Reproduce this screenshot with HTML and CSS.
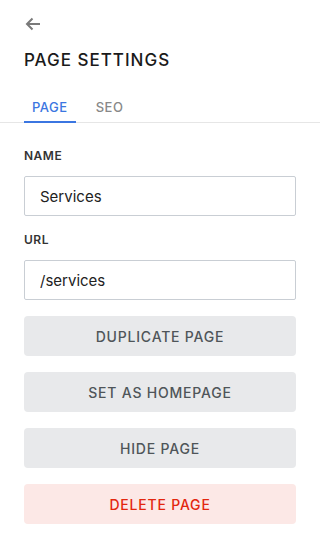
FILE: index.html
```html
<!DOCTYPE html>
<html lang="en">

<head>
  <meta charset="UTF-8">
  <meta name="viewport" content="width=device-width, initial-scale=1.0">
  <title>Page Settings</title>
  <link rel="stylesheet" href="styles.css">
</head>

<body>
  <div class="panel">
    <div class="panel-header">
      <button class="back-btn" title="Back">
        <svg width="16" height="14" viewBox="0 0 16 14">
          <path d="M15 7H2M7.5 1.5L2 7l5.5 5.5" fill="none" stroke="#7a7a7a" stroke-width="2" />
        </svg>
      </button>
      <h1 class="panel-title">PAGE SETTINGS</h1>
    </div>

    <div class="tabs">
      <div class="tab active">PAGE</div>
      <div class="tab">SEO</div>
    </div>

    <div class="panel-body">
      <div class="field">
        <label class="field-label">NAME</label>
        <input class="field-input" type="text" value="Services">
      </div>
      <div class="field field-last">
        <label class="field-label">URL</label>
        <input class="field-input" type="text" value="/services">
      </div>

      <div class="actions">
        <button class="action-btn">DUPLICATE PAGE</button>
        <button class="action-btn">SET AS HOMEPAGE</button>
        <button class="action-btn">HIDE PAGE</button>
        <button class="action-btn danger">DELETE PAGE</button>
      </div>
    </div>
  </div>
</body>

</html>
```

FILE: styles.css
```css
body {
  font-family: Inter, 'Liberation Sans', sans-serif;
  margin: 0;
  background-color: #fff;
  color: #222;
}

button {
  font-family: inherit;
  border: none;
  cursor: pointer;
}

.panel-header {
  padding: 17px 24px 0;
}

.back-btn {
  display: block;
  padding: 0;
  width: 16px;
  height: 14px;
  margin-left: 1px;
  background: none;
}

.back-btn svg {
  display: block;
}

.panel-title {
  margin: 19px 0 0;
  font-size: 17px;
  font-weight: 500;
  letter-spacing: 1px;
  line-height: 20px;
  color: #1a1a1a;
}

.tabs {
  display: flex;
  gap: 12px;
  margin-top: 27px;
  padding: 0 24px;
  border-bottom: 1px solid #e6e6e6;
}

.tab {
  padding: 3px 8px 7px;
  font-size: 13px;
  font-weight: 500;
  letter-spacing: 0.5px;
  line-height: 14px;
  color: #888;
  border-bottom: 2px solid transparent;
  margin-bottom: -1px;
}

.tab.active {
  color: #3b76e1;
  border-bottom-color: #3b76e1;
}

.panel-body {
  padding: 26px 24px 24px;
}

.field {
  display: flex;
  flex-direction: column;
  margin-bottom: 17px;
}

.field-last {
  margin-bottom: 16px;
}

.field-label {
  font-size: 12px;
  font-weight: 600;
  letter-spacing: 0.5px;
  line-height: 14px;
  color: #333;
  margin-bottom: 13px;
}

.field-input {
  height: 40px;
  box-sizing: border-box;
  padding: 0 15px;
  border: 1px solid #c9ced4;
  border-radius: 2px;
  font-family: inherit;
  font-size: 15px;
  color: #222;
  outline: none;
}

.actions {
  display: flex;
  flex-direction: column;
  gap: 16px;
}

.action-btn {
  height: 40px;
  border-radius: 4px;
  background-color: #e8e9eb;
  color: #4f5559;
  font-size: 14px;
  font-weight: 500;
  letter-spacing: 0.8px;
}

.action-btn.danger {
  background-color: #fce8e6;
  color: #e3260e;
}
```
